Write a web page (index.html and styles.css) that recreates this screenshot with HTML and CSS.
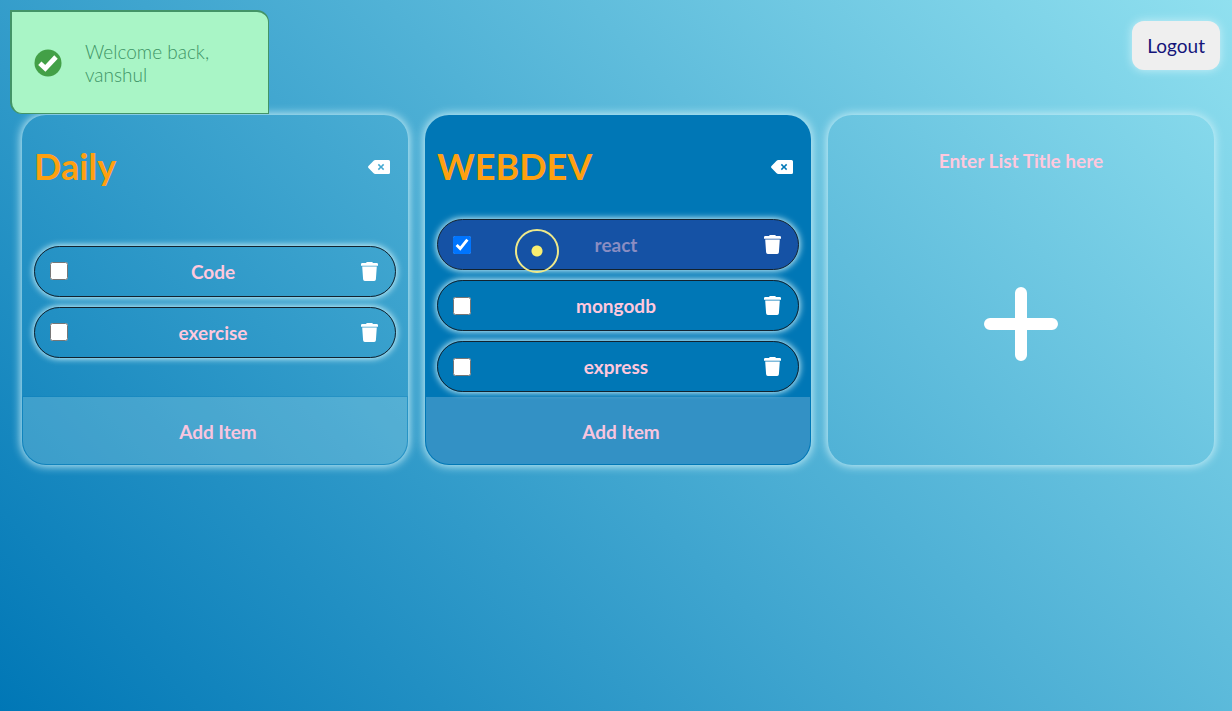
FILE: index.html
```html
<!DOCTYPE html>
<html lang="en">
<head>
<meta charset="utf-8">
<meta name="viewport" content="width=device-width, initial-scale=1">
<title>To-do lists</title>
<link rel="stylesheet" href="styles.css">
</head>
<body>
<svg class="sprite" aria-hidden="true">
  <symbol id="trash" viewBox="0 0 17 19">
    <path d="M0 2.300Q0 1 1.300 1H5Q5.300 0 6.300 0h4.400q1 0 1.300 1h3.700Q17 1 17 2.300V3.700H0ZM1.200 4.400H15.800L14.900 17.300Q14.800 19 13.200 19H3.800Q2.200 19 2.100 17.300Z"/>
  </symbol>
  <symbol id="delete" viewBox="0 0 22 14">
    <path fill-rule="evenodd" d="M7.300 0H20.500Q22 0 22 1.500V12.500Q22 14 20.500 14H7.300Q6.300 14 5.600 13.300L.5 8Q-.4 7 .5 6L5.600 .7Q6.300 0 7.300 0ZM9.800 4.900 11.900 7 9.800 9.100 10.900 10.200 13 8.100 15.100 10.200 16.200 9.100 14.100 7 16.200 4.900 15.100 3.800 13 5.900 10.900 3.800Z"/>
  </symbol>
</svg>

<header class="topbar">
  <button class="logout" type="button">Logout</button>
</header>

<div class="toast" role="status">
  <svg class="toast-icon" viewBox="0 0 28 28" aria-hidden="true">
    <circle cx="14" cy="14" r="13.500" fill="#43a047"/>
    <path d="M5.800 14.300 11.300 19.300 22 8" fill="none" stroke="#fff" stroke-width="4.800"/>
  </svg>
  <p class="toast-text">Welcome back, vanshul</p>
</div>

<main class="board">
  <section class="card">
    <div class="card-head">
      <h2 class="card-title">Daily</h2>
      <button class="icon-button" type="button" aria-label="Delete list Daily"><svg class="delete-icon"><use href="#delete"/></svg></button>
    </div>
    <ul class="items">
      <li class="item">
        <input class="check" type="checkbox" id="code"><label class="item-text" for="code">Code</label>
        <button class="icon-button" type="button" aria-label="Delete Code"><svg class="trash-icon"><use href="#trash"/></svg></button>
      </li>
      <li class="item">
        <input class="check" type="checkbox" id="exercise"><label class="item-text" for="exercise">exercise</label>
        <button class="icon-button" type="button" aria-label="Delete exercise"><svg class="trash-icon"><use href="#trash"/></svg></button>
      </li>
    </ul>
    <button class="add-item" type="button">Add Item</button>
  </section>

  <section class="card card-active">
    <div class="card-head">
      <h2 class="card-title">WEBDEV</h2>
      <button class="icon-button" type="button" aria-label="Delete list WEBDEV"><svg class="delete-icon"><use href="#delete"/></svg></button>
    </div>
    <ul class="items items-full">
      <li class="item item-done">
        <input class="check" type="checkbox" id="react" checked><label class="item-text" for="react">react</label>
        <button class="icon-button" type="button" aria-label="Delete react"><svg class="trash-icon"><use href="#trash"/></svg></button>
        <span class="pointer" aria-hidden="true"></span>
      </li>
      <li class="item">
        <input class="check" type="checkbox" id="mongodb"><label class="item-text" for="mongodb">mongodb</label>
        <button class="icon-button" type="button" aria-label="Delete mongodb"><svg class="trash-icon"><use href="#trash"/></svg></button>
      </li>
      <li class="item">
        <input class="check" type="checkbox" id="express"><label class="item-text" for="express">express</label>
        <button class="icon-button" type="button" aria-label="Delete express"><svg class="trash-icon"><use href="#trash"/></svg></button>
      </li>
    </ul>
    <button class="add-item" type="button">Add Item</button>
  </section>

  <section class="card card-new">
    <input class="new-title" type="text" aria-label="List title" placeholder="Enter List Title here">
    <button class="icon-button new-add" type="button" aria-label="Add list">
      <svg class="plus-icon" viewBox="0 0 74 74"><path d="M37 6V68M6 37H68" stroke="#fff" stroke-width="12" stroke-linecap="round"/></svg>
    </button>
  </section>
</main>
</body>
</html>
```
FILE: styles.css
```css
* {
  box-sizing: border-box;
}

body {
  margin: 0;
  min-height: 100vh;
  background: linear-gradient(45deg, #0077b6, #90e0ef);
  font-family: Lato, "Open Sans", sans-serif;
  font-size: 19px;
}

button,
input {
  font: inherit;
}

.sprite {
  display: none;
}

.topbar {
  display: flex;
  justify-content: flex-end;
  padding: 21px 12px 45px;
}

.logout {
  padding: 13px 15px;
  border: 0;
  border-radius: 12px;
  background: #efefef;
  box-shadow: 0 0 10px #caf0f8;
  color: #14147a;
  line-height: 23px;
}

.toast {
  position: absolute;
  z-index: 2;
  top: 10px;
  left: 10px;
  display: flex;
  align-items: center;
  gap: 23px;
  width: 259px;
  height: 104px;
  padding: 0 24px 0 22px;
  border: solid #439467;
  border-width: 2px 1px 1px 2px;
  border-radius: 0 12px;
  background: #a9f5c6;
  color: #3d9465;
}

.toast-icon {
  flex: none;
  width: 28px;
  height: 28px;
}

.toast-text {
  max-width: 136px;
  margin: 0;
  font-weight: 300;
  line-height: 23px;
}

.board {
  display: grid;
  grid-template-columns: repeat(auto-fit, minmax(300px, 1fr));
  gap: 17px;
  padding: 0 18px 24px 22px;
}

.card {
  display: flex;
  flex-direction: column;
  min-height: 350px;
  border-radius: 24px;
  box-shadow: 0 0 10px 1px #caf0f8;
  color: #ffc8dd;
  font-weight: 700;
}

.card-active {
  background: #0077b6;
}

.card-head {
  display: flex;
  align-items: center;
  justify-content: space-between;
  padding: 28px 18px 16px 12px;
}

.card-title {
  margin: 0;
  color: #ffa010;
  font-size: 36px;
  line-height: 47px;
}

.icon-button {
  display: flex;
  padding: 0;
  border: 0;
  background: none;
  fill: #fff;
  cursor: pointer;
}

.delete-icon {
  width: 22px;
  height: 14px;
}

.items {
  display: flex;
  flex: 1;
  flex-direction: column;
  justify-content: center;
  gap: 10px;
  margin: 0;
  padding: 5px 12px;
  list-style: none;
}

.items-full {
  justify-content: flex-end;
}

.item {
  position: relative;
  display: flex;
  align-items: center;
  height: 51px;
  padding: 0 17px 0 15px;
  border: 1px solid #12222e;
  border-radius: 26px;
  box-shadow: 0 0 6px 1px #caf0f8;
}

.item-done {
  background: #1552a5;
}

.check {
  width: 18px;
  height: 18px;
  margin: 0;
}

.item-text {
  flex: 1;
  padding-right: 3px;
  text-align: center;
}

.item-done .item-text {
  color: #8a8dc2;
}

.trash-icon {
  width: 17px;
  height: 19px;
}

.pointer {
  position: absolute;
  z-index: 1;
  top: 9px;
  left: 77px;
  width: 44px;
  height: 44px;
  border: 2px solid #eee98a;
  border-radius: 50%;
  background: radial-gradient(circle, #f8ee70 5px, transparent 6px);
}

.add-item {
  height: 67px;
  margin: 0 1px 1px;
  padding: 2px 0 0 6px;
  border: 0;
  border-radius: 0 0 23px 23px;
  background: rgba(202, 240, 248, 0.22);
  box-shadow: 0 0 0 1px rgba(0, 119, 182, 0.25);
  color: #f8c5df;
}

.card-active .add-item {
  background: #3391c5;
}

.card-new {
  align-items: center;
  padding: 32px 12px;
}

.new-title {
  width: 100%;
  padding: 0;
  border: 0;
  background: none;
  color: #ffc8dd;
  font-weight: 700;
  line-height: 28px;
  text-align: center;
}

.new-title::placeholder {
  color: #ffc8dd;
  opacity: 1;
}

.new-add {
  margin-top: 112px;
}

.plus-icon {
  width: 74px;
  height: 74px;
}
```
